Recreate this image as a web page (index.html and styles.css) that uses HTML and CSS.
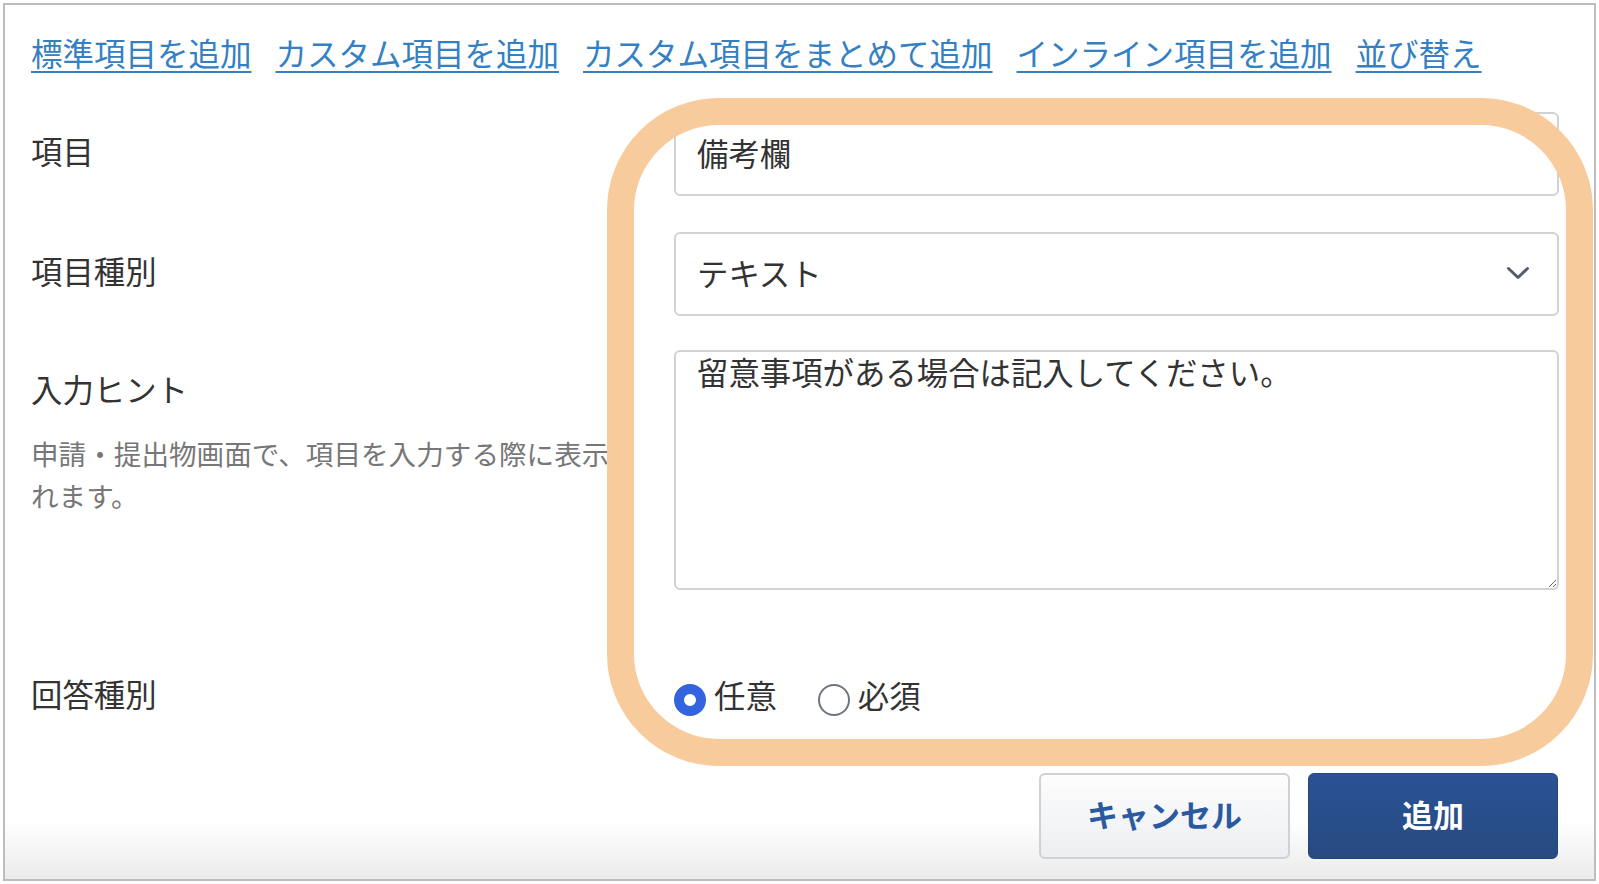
FILE: index.html
```html
<!DOCTYPE html>
<html lang="ja">
<head>
<meta charset="utf-8">
<title>項目の追加</title>
<link rel="stylesheet" href="styles.css">
</head>
<body>
<div class="frame">
  <nav class="links">
    <a href="#">標準項目を追加</a>
    <a href="#">カスタム項目を追加</a>
    <a href="#">カスタム項目をまとめて追加</a>
    <a href="#">インライン項目を追加</a>
    <a href="#">並び替え</a>
  </nav>
  <form class="form">
    <div class="row row-name">
      <div class="label-col"><label class="label">項目</label></div>
      <div class="field"><input class="control input" type="text" value="備考欄"></div>
    </div>
    <div class="row row-type">
      <div class="label-col"><label class="label">項目種別</label></div>
      <div class="field select-wrap">
        <select class="control select"><option>テキスト</option></select>
        <svg class="chevron" width="24" height="14" viewBox="0 0 24 14"><path d="M2.5 2.5 L12 11.5 L21.5 2.5" fill="none" stroke="#555d6b" stroke-width="3" stroke-linecap="round" stroke-linejoin="round"/></svg>
      </div>
    </div>
    <div class="row row-hint">
      <div class="label-col">
        <label class="label">入力ヒント</label>
        <p class="help">申請・提出物画面で、項目を入力する際に表示されます。</p>
      </div>
      <div class="field"><textarea class="control textarea">留意事項がある場合は記入してください。</textarea></div>
    </div>
    <div class="row row-answer">
      <div class="label-col"><span class="label">回答種別</span></div>
      <div class="field radios">
        <label class="radio"><input type="radio" name="answer" checked><span>任意</span></label>
        <label class="radio"><input type="radio" name="answer"><span>必須</span></label>
      </div>
    </div>
    <div class="actions">
      <button type="button" class="btn btn-cancel">キャンセル</button>
      <button type="button" class="btn btn-primary">追加</button>
    </div>
  </form>
  <div class="highlight"></div>
</div>
</body>
</html>
```
FILE: styles.css
```css
* { box-sizing: border-box; }

body {
  margin: 0;
  background: #fff;
  font-family: "Noto Sans CJK JP", "Noto Sans", sans-serif;
  color: #333;
}

.frame {
  position: relative;
  margin: 3px;
  width: 1593px;
  height: 878px;
  border: 2px solid #bdbdbd;
  background: linear-gradient(to bottom, #fff 0, #fff 815px, #ebebeb 100%);
  padding: 26px 35px 0 26px;
}

.links {
  display: flex;
  gap: 24px;
  font-size: 31.5px;
  line-height: 42px;
}

.links a {
  color: #3480c2;
  text-decoration: underline;
  text-decoration-thickness: 2px;
  text-underline-offset: 5px;
}

.form {
  margin-top: 39px;
}

.row {
  display: flex;
}

.row-type { margin-top: 36px; }
.row-hint { margin-top: 34px; }
.row-answer { margin-top: 65px; }

.label-col {
  width: 612px;
  margin-right: 31px;
  flex: none;
}

.label {
  display: block;
  font-size: 31.4px;
  line-height: 78px;
  padding-bottom: 6px;
  color: #333;
}

.help {
  margin: -2px 0 0 0;
  font-size: 27.6px;
  line-height: 42px;
  color: #777;
}

.field {
  width: 885px;
  flex: none;
}

.control {
  display: block;
  width: 100%;
  border: 2px solid #d2d2d2;
  border-radius: 6px;
  background: #fff;
  font-family: "Noto Sans CJK JP", "Noto Sans", sans-serif;
  font-size: 31.4px;
  color: #333;
  outline: none;
}

.input,
.select {
  height: 84px;
  padding: 0 21px 4px 21px;
}

.select {
  appearance: none;
  -webkit-appearance: none;
}

.select-wrap {
  position: relative;
}

.chevron {
  position: absolute;
  right: 29px;
  top: 34px;
}

.textarea {
  height: 240px;
  padding: 0 21px;
  line-height: 40px;
  resize: both;
}

.radios {
  display: flex;
  align-items: center;
  gap: 41px;
  height: 84px;
}

.radio {
  display: flex;
  align-items: center;
  gap: 8px;
  font-size: 31.4px;
  line-height: 42px;
  color: #333;
  padding-bottom: 4px;
}

.radio input {
  appearance: none;
  -webkit-appearance: none;
  width: 32px;
  height: 32px;
  margin: 10px 0 0 0;
  border: 2px solid #6f7580;
  border-radius: 50%;
  background: #fff;
}

.radio input:checked {
  border: 10px solid #3463e0;
}

.actions {
  display: flex;
  justify-content: flex-end;
  gap: 18px;
  margin-top: 34px;
  padding-right: 1px;
}

.btn {
  height: 86px;
  padding-bottom: 7px;
  border-radius: 6px;
  font-family: "Noto Sans CJK JP", "Noto Sans", sans-serif;
  font-size: 31px;
  font-weight: 700;
  cursor: pointer;
}

.btn-cancel {
  width: 251px;
  border: 2px solid #cfd1d4;
  background: linear-gradient(to bottom, #fdfdfd, #eceef1);
  color: #2a5aa0;
}

.btn-primary {
  width: 250px;
  border: 1px solid #23467c;
  background: linear-gradient(to bottom, #2a5396, #274a80);
  color: #fff;
}

.highlight {
  position: absolute;
  left: 602px;
  top: 93px;
  width: 986px;
  height: 668px;
  border: 27px solid #f8cb9c;
  border-radius: 112px;
  pointer-events: none;
}
```
